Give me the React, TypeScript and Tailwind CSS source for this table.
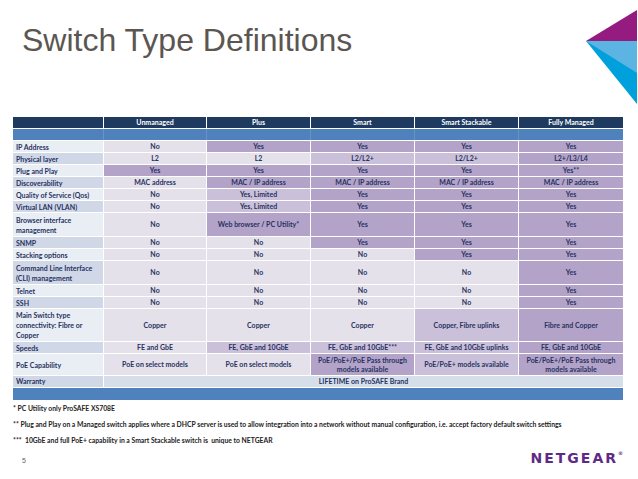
import React from "react";

type Shade = "L" | "M" | "P";
const shadeClass: Record<Shade, string> = {
  L: "bg-[#e5e1eb]",
  M: "bg-[#cbc0da]",
  P: "bg-[#b3a3c8]",
};

type Row = { label: React.ReactNode; h: string; cells: [React.ReactNode, Shade][] };

const rows: Row[] = [
  { label: "IP Address", h: "h-[12px]", cells: [["No", "L"], ["Yes", "P"], ["Yes", "P"], ["Yes", "P"], ["Yes", "P"]] },
  { label: "Physical layer", h: "h-[12px]", cells: [["L2", "L"], ["L2", "L"], ["L2/L2+", "M"], ["L2/L2+", "M"], ["L2+/L3/L4", "P"]] },
  { label: "Plug and Play", h: "h-[12px]", cells: [["Yes", "P"], ["Yes", "P"], ["Yes", "P"], ["Yes", "P"], ["Yes**", "P"]] },
  { label: "Discoverability", h: "h-[12px]", cells: [["MAC address", "L"], ["MAC / IP address", "P"], ["MAC / IP address", "P"], ["MAC / IP address", "P"], ["MAC / IP address", "P"]] },
  { label: "Quality of Service (Qos)", h: "h-[12px]", cells: [["No", "L"], ["Yes, Limited", "M"], ["Yes", "P"], ["Yes", "P"], ["Yes", "P"]] },
  { label: "Virtual LAN (VLAN)", h: "h-[12px]", cells: [["No", "L"], ["Yes, Limited", "M"], ["Yes", "P"], ["Yes", "P"], ["Yes", "P"]] },
  { label: <>Browser interface<br />management</>, h: "h-[24px]", cells: [["No", "L"], ["Web browser / PC Utility*", "P"], ["Yes", "P"], ["Yes", "P"], ["Yes", "P"]] },
  { label: "SNMP", h: "h-[12px]", cells: [["No", "L"], ["No", "L"], ["Yes", "P"], ["Yes", "P"], ["Yes", "P"]] },
  { label: "Stacking options", h: "h-[12px]", cells: [["No", "L"], ["No", "L"], ["No", "L"], ["Yes", "P"], ["Yes", "P"]] },
  { label: <>Command Line Interface<br />(CLI) management</>, h: "h-[24px]", cells: [["No", "L"], ["No", "L"], ["No", "L"], ["No", "L"], ["Yes", "P"]] },
  { label: "Telnet", h: "h-[12px]", cells: [["No", "L"], ["No", "L"], ["No", "L"], ["No", "L"], ["Yes", "P"]] },
  { label: "SSH", h: "h-[12px]", cells: [["No", "L"], ["No", "L"], ["No", "L"], ["No", "L"], ["Yes", "P"]] },
  { label: <>Main Switch type<br />connectivity: Fibre or<br />Copper</>, h: "h-[33px]", cells: [["Copper", "L"], ["Copper", "L"], ["Copper", "L"], ["Copper, Fibre uplinks", "M"], ["Fibre and Copper", "P"]] },
  { label: "Speeds", h: "h-[12px]", cells: [["FE and GbE", "L"], ["FE, GbE and 10GbE", "M"], ["FE, GbE and 10GbE***", "M"], ["FE, GbE and 10GbE uplinks", "M"], ["FE, GbE and 10GbE", "P"]] },
  { label: "PoE Capability", h: "h-[22px]", cells: [["PoE on select models", "L"], ["PoE on select models", "L"], [<>PoE/PoE+/PoE Pass through<br />models available</>, "P"], ["PoE/PoE+ models available", "M"], [<>PoE/PoE+/PoE Pass through<br />models available</>, "P"]] },
];

const cols = ["Unmanaged", "Plus", "Smart", "Smart Stackable", "Fully Managed"];
const widths = ["w-[103px]", "w-[104px]", "w-[104px]", "w-[104px]", "w-[104px]"];

export default function App() {
  return (
    <div className="relative w-[638px] h-[479px] bg-white overflow-hidden" style={{ fontFamily: "Lato, 'Open Sans', sans-serif" }}>
      {/* decorative corner */}
      <svg className="absolute right-0 top-0" width="52" height="110" viewBox="587 0 52 110">
        <polygon points="587,41 638,10 638,41" fill="#951b81" />
        <polygon points="587,41 638,41 638,104" fill="#00a0dc" />
        <polygon points="587,41 638,41 638,73" fill="#5bb4e2" />
      </svg>

      <div className="pl-[22px] pt-[24px] h-[117px]">
        <h1 className="text-[32px] leading-[32px] text-[#5b5651]" style={{ fontFamily: "'Liberation Sans', Arial, sans-serif" }}>
          Switch Type Definitions
        </h1>
      </div>

      <div className="ml-[13px] w-[610px] text-[7px] font-bold text-[#27325f]">
        {/* header */}
        <div className="flex h-[12px] bg-[#1e3a5f] border-b border-white text-white">
          <div className="w-[91px] border-r border-white" />
          {cols.map((c, i) => (
            <div key={c} className={`${widths[i]} flex items-center justify-center ${i < 4 ? "border-r border-white" : ""}`}>
              {c}
            </div>
          ))}
        </div>
        {/* blue band */}
        <div className="flex h-[12px] bg-[#4f81bd] border-b border-white">
          <div className="w-[91px] border-r border-[#6a93c6]" />
          {cols.map((c, i) => (
            <div key={c} className={`${widths[i]} ${i < 4 ? "border-r border-[#6a93c6]" : ""}`} />
          ))}
        </div>
        {rows.map((r, ri) => (
          <div key={ri} className={`flex ${r.h} border-b border-white`}>
            <div className={`w-[91px] shrink-0 border-r border-white flex items-center pl-[3px] leading-[10px] ${ri % 2 === 0 ? "bg-[#e9edf4]" : "bg-[#d0d8e8]"}`}>
              <span>{r.label}</span>
            </div>
            {r.cells.map(([t, s], ci) => (
              <div key={ci} className={`${widths[ci]} shrink-0 flex items-center justify-center text-center leading-[9px] ${shadeClass[s]} ${ci < 4 ? "border-r border-white" : ""}`}>
                <span>{t}</span>
              </div>
            ))}
          </div>
        ))}
        {/* warranty */}
        <div className="flex h-[12px] border-b border-white">
          <div className="w-[91px] shrink-0 border-r border-white flex items-center pl-[3px] bg-[#d0d8e8]">Warranty</div>
          <div className="flex-1 flex items-center justify-center bg-[#d6deea]">LIFETIME on ProSAFE Brand</div>
        </div>
        <div className="h-[12px] bg-[#4f81bd]" />
      </div>

      <div className="ml-[13px] mt-[4px] flex flex-col gap-[7px] text-[6.8px] leading-[9px] font-bold text-[#222]">
        <div>* PC Utility only ProSAFE XS708E</div>
        <div>** Plug and Play on a Managed switch applies where a DHCP server is used to allow integration into a network without manual configuration, i.e. accept factory default switch settings</div>
        <div>*** &nbsp;10GbE and full PoE+ capability in a Smart Stackable switch is &nbsp;unique to NETGEAR</div>
      </div>

      <div className="mt-[5px] flex items-center justify-between pl-[22px] pr-[15px]">
        <span className="text-[7px] text-[#666] mt-[6px]" style={{ fontFamily: "'Liberation Sans', Arial, sans-serif" }}>5</span>
        <span className="text-[14px] font-bold tracking-[2px] text-[#5f2a86] leading-none" style={{ fontFamily: "'DejaVu Sans', sans-serif" }}>
          NETGEAR<sup className="text-[5px] align-super tracking-normal">®</sup>
        </span>
      </div>
    </div>
  );
}
